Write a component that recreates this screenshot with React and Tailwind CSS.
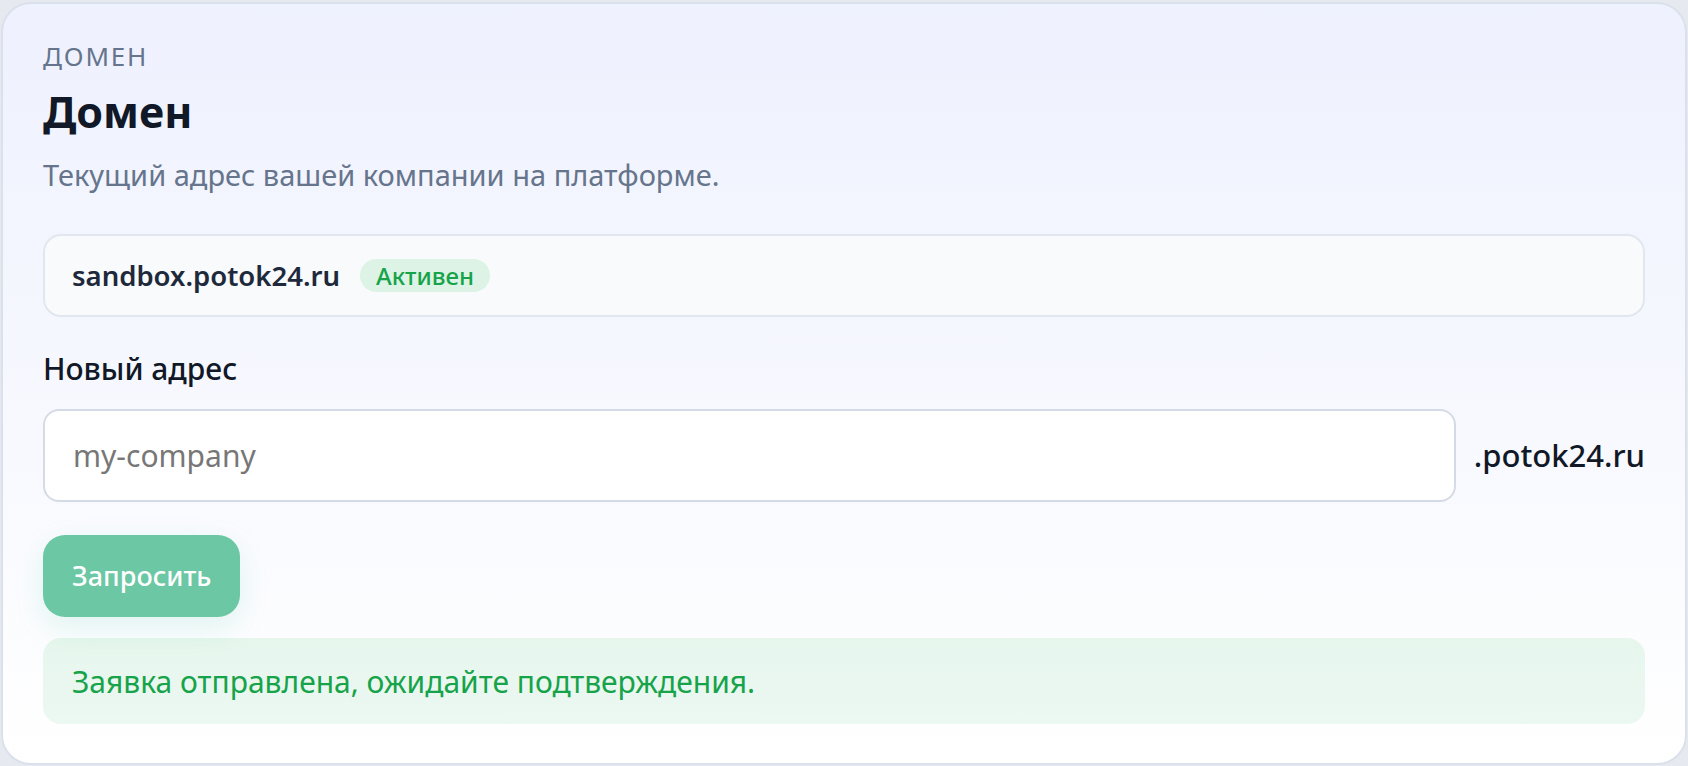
const font = { fontFamily: '"Noto Sans", "Open Sans", sans-serif' };

export default function App() {
  return (
    <div className="min-h-screen bg-[#e6e9ef] px-px pt-[2px]" style={font}>
      <section className="rounded-[30px] border-2 border-[#dbe1ea] bg-gradient-to-b from-[#eef1fe] to-white px-[40px] pt-[36px] pb-[39px]">
        <div className="text-[26px] leading-[32px] tracking-[0.07em] uppercase text-[#66758c]">Домен</div>
        <h1 className="mt-[12px] text-[43px] leading-[56px] font-bold text-[#111827]">Домен</h1>
        <p className="mt-[15px] text-[29px] leading-[40px] text-[#66758c]">Текущий адрес вашей компании на платформе.</p>

        <div className="mt-[39px] flex h-[83px] items-center gap-[20px] rounded-[18px] border-2 border-[#e2e7ef] bg-[#f8fafc] px-[27px]">
          <span className="text-[27.5px] leading-[36px] font-semibold text-[#1e293b]">sandbox.potok24.ru</span>
          <span className="rounded-full bg-[#dcf3e5] px-[16px] text-[24px] leading-[33px] font-medium text-[#16a34a]">Активен</span>
        </div>

        <label className="mt-[34px] block text-[30px] leading-[36px] font-medium text-[#111827]">Новый адрес</label>
        <div className="mt-[22px] flex items-center gap-[18px]">
          <input
            className="h-[93px] flex-1 rounded-[16px] border-2 border-[#d5dbe6] bg-white px-[28px] text-[30px] text-[#111827] outline-none placeholder:text-[#777777]"
            placeholder="my-company"
            style={font}
          />
          <span className="text-[31px] font-medium text-[#111827]">.potok24.ru</span>
        </div>

        <button
          className="mt-[33px] h-[82px] rounded-[22px] bg-[#6bc7a4] px-[29px] text-[27px] font-medium text-white shadow-[0_10px_30px_rgba(16,185,129,0.12)]"
          style={font}
        >
          Запросить
        </button>

        <div className="mt-[21px] flex h-[86px] items-center rounded-[18px] bg-gradient-to-b from-[#e6f6ed] to-[#ecf8f2] px-[29px] text-[30px] text-[#16a34a]">
          Заявка отправлена, ожидайте подтверждения.
        </div>
      </section>
    </div>
  );
}
